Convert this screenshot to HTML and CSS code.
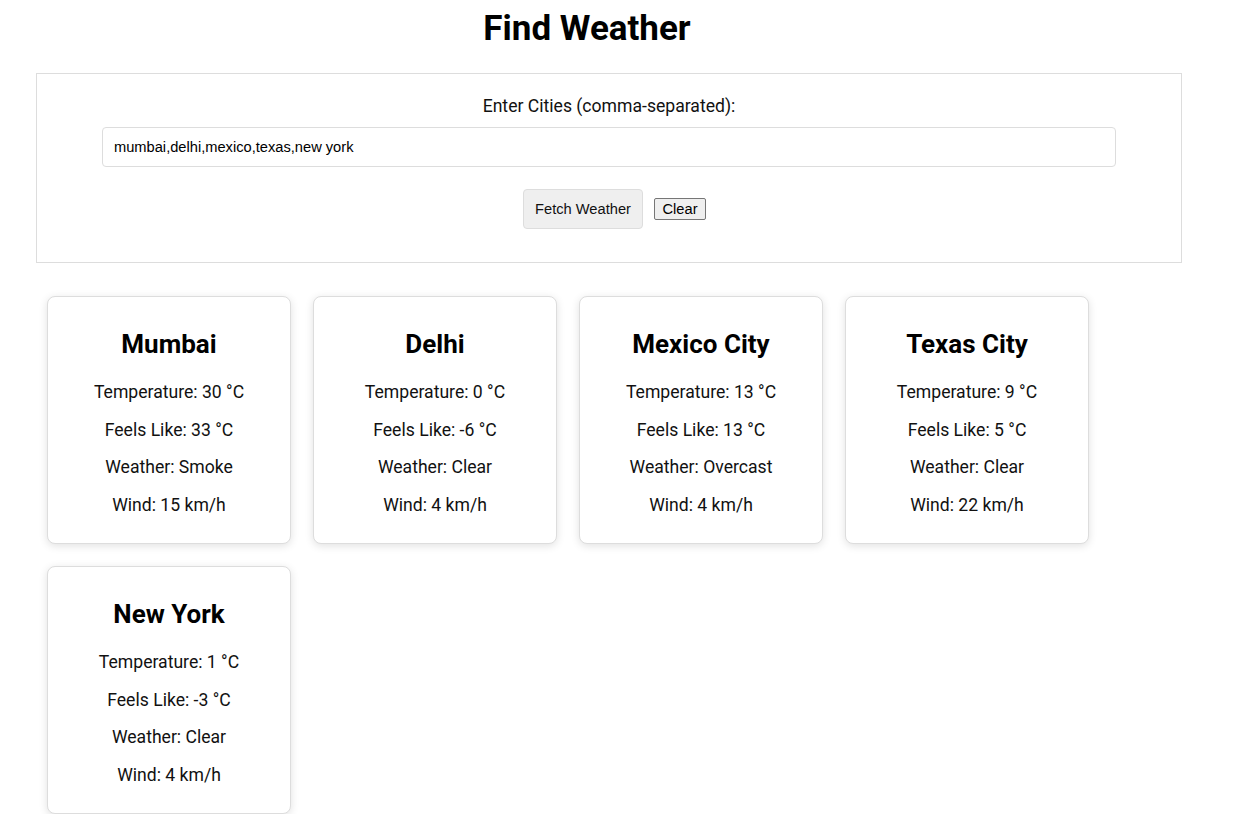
FILE: index.html
```html
<!DOCTYPE html>
<html lang="en">
<head>
<meta charset="utf-8">
<title>Find Weather</title>
<link rel="stylesheet" href="styles.css">
</head>
<body>
<h1 class="title">Find Weather</h1>
<div class="search-box">
  <label class="label" for="cities">Enter Cities (comma-separated):</label>
  <input class="city-input" id="cities" type="text" value="mumbai,delhi,mexico,texas,new york">
  <div class="actions">
    <button class="fetch-btn" type="button">Fetch Weather</button>
    <button class="clear-btn" type="button">Clear</button>
  </div>
</div>
<div class="cards">
  <div class="card">
    <h2 class="city">Mumbai</h2>
    <p class="line">Temperature: 30 °C</p>
    <p class="line">Feels Like: 33 °C</p>
    <p class="line">Weather: Smoke</p>
    <p class="line">Wind: 15 km/h</p>
  </div>
  <div class="card">
    <h2 class="city">Delhi</h2>
    <p class="line">Temperature: 0 °C</p>
    <p class="line">Feels Like: -6 °C</p>
    <p class="line">Weather: Clear</p>
    <p class="line">Wind: 4 km/h</p>
  </div>
  <div class="card">
    <h2 class="city">Mexico City</h2>
    <p class="line">Temperature: 13 °C</p>
    <p class="line">Feels Like: 13 °C</p>
    <p class="line">Weather: Overcast</p>
    <p class="line">Wind: 4 km/h</p>
  </div>
  <div class="card">
    <h2 class="city">Texas City</h2>
    <p class="line">Temperature: 9 °C</p>
    <p class="line">Feels Like: 5 °C</p>
    <p class="line">Weather: Clear</p>
    <p class="line">Wind: 22 km/h</p>
  </div>
  <div class="card">
    <h2 class="city">New York</h2>
    <p class="line">Temperature: 1 °C</p>
    <p class="line">Feels Like: -3 °C</p>
    <p class="line">Weather: Clear</p>
    <p class="line">Wind: 4 km/h</p>
  </div>
</div>
</body>
</html>
```
FILE: styles.css
```css
html, body {
  margin: 0;
  padding: 0;
  background: #fff;
}
body {
  font-family: Roboto, "Liberation Sans", Arial, sans-serif;
  color: #000;
}
.title {
  margin: 0;
  padding: 9px 62px 0 0;
  height: 40px;
  line-height: 40px;
  font-size: 35px;
  font-weight: 700;
  text-align: center;
}
.search-box {
  margin: 24px 0 0 36px;
  width: 1146px;
  height: 190px;
  box-sizing: border-box;
  border: 1px solid #ddd;
  display: flex;
  flex-direction: column;
  align-items: center;
  padding-top: 20px;
}
.label {
  font-size: 17.6px;
  line-height: 24px;
  height: 24px;
  color: #111;
}
.city-input {
  margin-top: 9px;
  width: 1014px;
  height: 40px;
  box-sizing: border-box;
  border: 1px solid #ddd;
  border-radius: 4px;
  padding: 0 11px;
  font-family: "Liberation Sans", Arial, sans-serif;
  font-size: 14.67px;
  color: #000;
  outline: none;
}
.actions {
  margin-top: 22px;
  margin-left: 11px;
  display: flex;
  align-items: center;
  gap: 11px;
}
.fetch-btn {
  height: 40px;
  width: 120px;
  box-sizing: border-box;
  background: #efefef;
  border: 1px solid #ddd;
  border-radius: 4px;
  font-family: "Liberation Sans", Arial, sans-serif;
  font-size: 14.67px;
  color: #111;
  padding: 0;
}
.clear-btn {
  height: 22px;
  width: 52px;
  box-sizing: border-box;
  background: #efefef;
  border: 1px solid #767676;
  border-radius: 2px;
  font-family: "Liberation Sans", Arial, sans-serif;
  font-size: 14.67px;
  color: #000;
  padding: 0;
}
.cards {
  display: flex;
  flex-wrap: wrap;
  gap: 22px;
  padding: 33px 0 0 47px;
  width: 1100px;
}
.card {
  width: 244px;
  height: 248px;
  box-sizing: border-box;
  border: 1px solid #ddd;
  border-radius: 8px;
  box-shadow: 0 2px 8px rgba(0, 0, 0, 0.12);
  text-align: center;
  padding-top: 32px;
  background: #fff;
}
.city {
  margin: 0 0 15px;
  font-size: 26px;
  line-height: 30px;
  font-weight: 700;
}
.line {
  margin: 0;
  font-size: 17.6px;
  line-height: 37.5px;
  color: #111;
}
```
